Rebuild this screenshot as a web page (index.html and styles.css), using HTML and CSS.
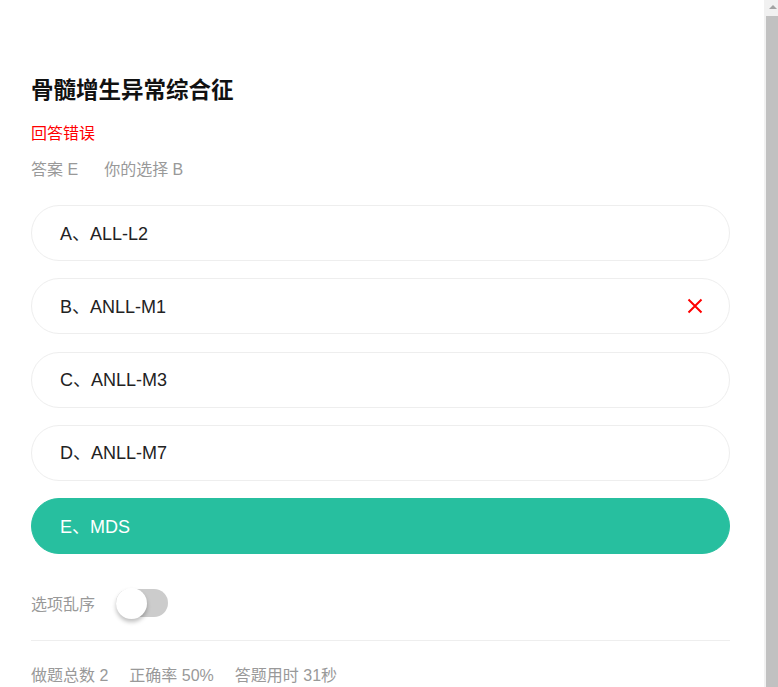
FILE: index.html
```html
<!DOCTYPE html>
<html lang="zh-CN">
<head>
<meta charset="utf-8">
<title>骨髓增生异常综合征</title>
<link rel="stylesheet" href="styles.css">
</head>
<body>
<div class="page">
  <h1 class="title">骨髓增生异常综合征</h1>
  <div class="result">回答错误</div>
  <div class="answer-row"><span class="answer">答案 E</span><span>你的选择 B</span></div>
  <ul class="options">
    <li class="option">A、ALL-L2</li>
    <li class="option wrong"><span>B、ANLL-M1</span>
      <svg class="x-icon" width="16" height="16" viewBox="0 0 16 16"><path d="M1.5 1.5 L14.5 14.5 M14.5 1.5 L1.5 14.5" stroke="#f00" stroke-width="2" fill="none"/></svg>
    </li>
    <li class="option">C、ANLL-M3</li>
    <li class="option">D、ANLL-M7</li>
    <li class="option correct">E、MDS</li>
  </ul>
  <div class="shuffle-row">
    <span class="shuffle-label">选项乱序</span>
    <span class="switch"><span class="knob"></span></span>
  </div>
  <div class="divider"></div>
  <div class="stats"><span>做题总数 2</span><span>正确率 50%</span><span>答题用时 31秒</span></div>
</div>
<div class="scrollbar" aria-hidden="true">
  <span class="scroll-arrow"></span>
  <span class="scroll-thumb"></span>
</div>
</body>
</html>
```

FILE: styles.css
```css
html, body {
  margin: 0;
  padding: 0;
  background: #fff;
}
body {
  font-family: "Liberation Sans", "Noto Sans CJK SC", sans-serif;
  color: #222;
  padding-right: 14px;
}
.page {
  padding: 76px 34px 40px 31px;
}
.title {
  margin: 0;
  font-size: 22.5px;
  line-height: 30px;
  font-weight: bold;
  color: #111;
}
.result {
  margin-top: 16px;
  font-size: 16px;
  line-height: 24px;
  color: #f00;
}
.answer-row {
  margin-top: 12px;
  font-size: 16px;
  line-height: 24px;
  color: #999;
  display: flex;
  gap: 26px;
}
.options {
  list-style: none;
  margin: 23px 0 0;
  padding: 0;
  display: flex;
  flex-direction: column;
  gap: 17.3px;
}
.option {
  height: 56px;
  box-sizing: border-box;
  border: 1px solid #eee;
  border-radius: 28px;
  padding: 0 26px 3px 28px;
  font-size: 18px;
  display: flex;
  align-items: center;
  justify-content: space-between;
  color: #222;
}
.option.wrong {
  padding-bottom: 0;
}
.option.wrong span {
  padding-bottom: 3px;
}
.option.correct {
  background: #27bf9f;
  border-color: #27bf9f;
  color: #fff;
}
.x-icon {
  display: block;
}
.shuffle-row {
  margin-top: 34px;
  height: 30px;
  display: flex;
  align-items: center;
  gap: 21px;
}
.shuffle-label {
  font-size: 16px;
  color: #999;
}
.switch {
  position: relative;
  width: 52px;
  height: 28px;
  border-radius: 14px;
  background: #ccc;
}
.knob {
  position: absolute;
  left: 0;
  top: -1.5px;
  width: 31px;
  height: 31px;
  border-radius: 50%;
  background: #fff;
  box-shadow: 0 3px 4px rgba(0, 0, 0, 0.25);
}
.divider {
  margin-top: 22px;
  height: 1px;
  background: #eee;
}
.stats {
  margin-top: 23px;
  font-size: 16px;
  line-height: 24px;
  color: #999;
  display: flex;
  gap: 21px;
}
.scrollbar {
  position: fixed;
  top: 0;
  right: 0;
  bottom: 0;
  width: 14px;
  background: #f1f1f1;
}
.scroll-arrow {
  position: absolute;
  top: 5px;
  left: 5px;
  width: 0;
  height: 0;
  border-left: 4px solid transparent;
  border-right: 4px solid transparent;
  border-bottom: 4px solid #a3a3a3;
}
.scroll-thumb {
  position: absolute;
  top: 16px;
  left: 2px;
  right: 0;
  bottom: 0;
  background: #c1c1c1;
}
```
